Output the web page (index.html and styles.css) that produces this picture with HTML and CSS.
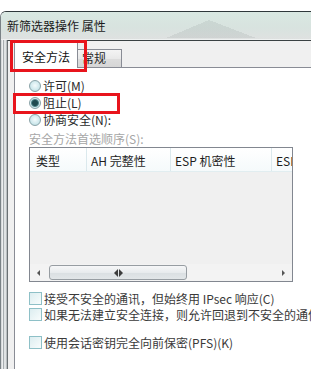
FILE: index.html
```html
<!DOCTYPE html>
<html lang="zh-CN">
<head>
    <meta charset="UTF-8">
    <title>新筛选器操作 属性</title>
    <link rel="stylesheet" href="styles.css">
</head>
<body>
<div class="window">
    <div class="titlebar">新筛选器操作 属性</div>
    <div class="main">
        <div class="frame"></div>
        <div class="client">
            <div class="tabs">
                <div class="tab tab-active">安全方法</div>
                <div class="tab">常规</div>
            </div>
            <div class="panel">
                <div class="option"><span class="radio"></span>许可(M)</div>
                <div class="option"><span class="radio radio-on"></span>阻止(L)</div>
                <div class="option"><span class="radio"></span>协商安全(N):</div>

                <div class="group-label">安全方法首选顺序(S):</div>
                <div class="listbox">
                    <div class="list-header">
                        <div class="col col-type">类型</div>
                        <div class="col col-ah">AH 完整性</div>
                        <div class="col col-esp">ESP 机密性</div>
                        <div class="col col-last">ESP 完整性</div>
                    </div>
                    <div class="list-body"></div>
                    <div class="hscroll">
                        <div class="sb-btn"><span class="arrow-left"></span></div>
                        <div class="sb-track">
                            <div class="sb-thumb"><span class="arrow-left grip"></span><span class="arrow-right grip"></span></div>
                        </div>
                        <div class="sb-btn"><span class="arrow-right"></span></div>
                    </div>
                </div>

                <div class="check first"><span class="checkbox"></span>接受不安全的通讯，但始终用 IPsec 响应(C)</div>
                <div class="check"><span class="checkbox"></span>如果无法建立安全连接，则允许回退到不安全的通信(W)</div>
                <div class="check last"><span class="checkbox"></span>使用会话密钥完全向前保密(PFS)(K)</div>
            </div>
        </div>
    </div>
</div>

<!-- red marks drawn over the dialog -->
<div class="mark mark-tab"></div>
<div class="mark mark-radio"></div>
</body>
</html>
```

FILE: styles.css
```css
html, body {
    overflow: hidden;
}
body {
    margin: 0;
    position: relative;
    height: 383px;
    background: #fff;
    font-family: "Noto Sans CJK SC", sans-serif;
    font-size: 12px;
    color: #2a2a2a;
}

.window {
    margin-top: 11px;
    height: 357px;
    display: flex;
    flex-direction: column;
    border-top: 1px solid #2f383b;
    border-left: 1px solid #7a8286;
    border-top-left-radius: 6px;
    overflow: hidden;
}

.titlebar {
    flex-shrink: 0;
    height: 28px;
    padding-left: 6px;
    line-height: 27px;
    color: #1b1b1b;
    white-space: nowrap;
    box-shadow: inset 0 -1px #eef1f1;
    background:
        linear-gradient(to bottom right, transparent 50%, rgba(110, 120, 120, 0.13) 50%) 165px 8px / 43px 18px no-repeat,
        linear-gradient(to bottom left, transparent 50%, rgba(110, 120, 120, 0.13) 50%) 208px 8px / 47px 18px no-repeat,
        linear-gradient(to bottom, #d9e8e2 0%, #d8e3df 55%, #dfe1e1 100%);
}

.main {
    flex: 1;
    display: flex;
}
.frame {
    width: 6px;
    flex-shrink: 0;
    background: linear-gradient(to right, #d6d9db 0 1px, #eceeef 1px 2px, #a7adb0 2px 3px, #e0e3e4 3px 5px, #b9bec1 5px 6px);
}
.client {
    flex: 1;
    display: flex;
    flex-direction: column;
    min-width: 0;
    padding-left: 6px;
    background: #f0f0f0;
    border-top: 1px solid #3a4143;
    border-left: 1px solid #6b7174;
}

/* tabs */
.tabs {
    display: flex;
    align-items: flex-end;
    height: 26px;
    flex-shrink: 0;
}
.tab {
    box-sizing: border-box;
    width: 44px;
    height: 18px;
    padding-left: 4px;
    line-height: 16px;
    border: 1px solid #898c95;
    border-left: none;
    border-bottom: none;
    white-space: nowrap;
    background: linear-gradient(#f4f4f4, #e9e9e9 50%, #dddddd 51%, #d6d6d6);
}
.tab-active {
    position: relative;
    width: 64px;
    height: 27px;
    margin-bottom: -1px;
    padding: 2px 0 0 7px;
    line-height: 25px;
    border-left: 1px solid #898c95;
    background: #fff;
    color: #111;
}

.panel {
    flex: 1;
    overflow: hidden;
    padding: 9px 0 0 14px;
    background: #fff;
    border-top: 1px solid #898c95;
    border-left: 1px solid #898c95;
}

/* radio buttons */
.option {
    display: flex;
    align-items: center;
    gap: 2px;
    height: 17px;
    white-space: nowrap;
}
.radio {
    flex-shrink: 0;
    box-sizing: border-box;
    width: 12px;
    height: 12px;
    border-radius: 50%;
    border: 1px solid #8aa3a8;
    background: radial-gradient(circle at 50% 45%, #f4fbfc 0, #d2eaee 55%, #a9d3d9 100%);
}
.radio-on {
    background: radial-gradient(circle, #1f4a50 0 2.5px, #4d8389 3.5px, #d2eaee 4.5px, #a9d3d9 100%);
}

.group-label {
    margin-top: 3px;
    line-height: 16px;
    color: #a6a6a6;
    white-space: nowrap;
}

/* list view */
.listbox {
    width: 262px;
    height: 133px;
    display: flex;
    flex-direction: column;
    border: 1px solid #828790;
    background: #f0f0f0;
}
.list-header {
    box-sizing: border-box;
    height: 24px;
    display: flex;
    flex-shrink: 0;
    overflow: hidden;
    border-bottom: 1px solid #e1edf0;
    background: linear-gradient(#ffffff, #f5fafb);
}
.col {
    box-sizing: border-box;
    flex-shrink: 0;
    line-height: 25px;
    white-space: nowrap;
    color: #1e1e1e;
    border-right: 1px solid #dbe9ed;
}
.col-type { width: 57px; padding-left: 6px; }
.col-ah { width: 84px; padding-left: 4px; }
.col-esp { width: 101px; padding-left: 4px; }
.col-last { flex: 1; padding-left: 4px; overflow: hidden; border-right: none; }

.list-body {
    flex: 1;
}

.hscroll {
    display: flex;
    height: 17px;
    flex-shrink: 0;
    background: #f3f3f3;
}
.sb-btn {
    width: 17px;
    flex-shrink: 0;
    display: flex;
    align-items: center;
    justify-content: center;
}
.sb-track {
    flex: 1;
    padding: 1px 0 0 2px;
}
.sb-thumb {
    box-sizing: border-box;
    width: 138px;
    height: 15px;
    display: flex;
    align-items: center;
    justify-content: center;
    gap: 1px;
    border: 1px solid #979da2;
    border-radius: 3px;
    background: linear-gradient(#f6f7f8, #e8ebed 50%, #dadfe2 51%, #e2e6e8);
}
.arrow-left {
    border-style: solid;
    border-width: 3px 3px 3px 0;
    border-color: transparent #555 transparent transparent;
}
.arrow-right {
    border-style: solid;
    border-width: 3px 0 3px 3px;
    border-color: transparent transparent transparent #555;
}
.grip {
    border-top-width: 4px;
    border-bottom-width: 4px;
    border-color: transparent;
}
.grip.arrow-left { border-right: 4px solid #3c3c3c; }
.grip.arrow-right { border-left: 4px solid #3c3c3c; }

/* check boxes */
.check {
    display: flex;
    align-items: center;
    gap: 2px;
    height: 16px;
    white-space: nowrap;
    color: #3a3a3a;
}
.check.first { margin-top: 8px; }
.check.last { margin-top: 12px; }
.checkbox {
    flex-shrink: 0;
    box-sizing: border-box;
    width: 13px;
    height: 13px;
    border: 1px solid #8ec0c7;
    background: linear-gradient(135deg, #dcedf0, #f8fcfc);
}

/* annotation boxes */
.mark {
    position: absolute;
    box-sizing: border-box;
    border: 3px solid #e8141c;
}
.mark-tab {
    left: 10px;
    top: 40px;
    width: 77px;
    height: 32px;
}
.mark-radio {
    left: 13px;
    top: 93px;
    width: 107px;
    height: 21px;
}
```
